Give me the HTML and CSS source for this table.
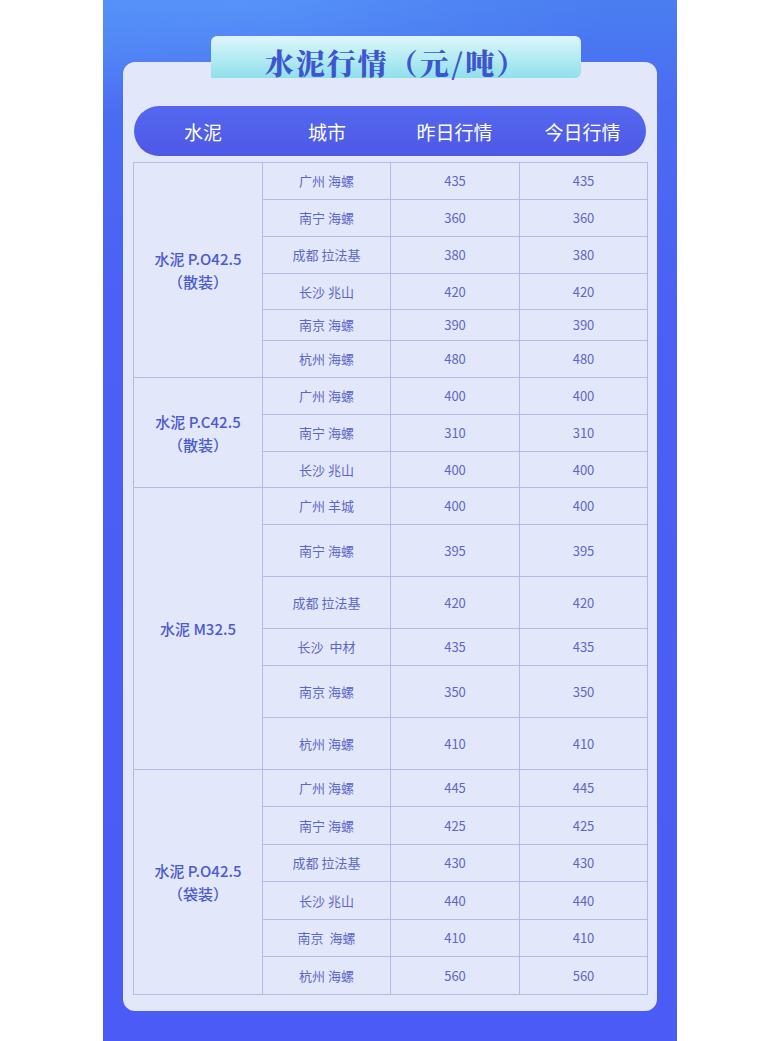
FILE: index.html
```html
<!DOCTYPE html>
<html lang="zh-CN">
<head>
<meta charset="utf-8">
<title>水泥行情</title>
<link rel="stylesheet" href="styles.css">
</head>
<body>
<div class="panel">
  <div class="card">
    <div class="tab">水泥行情（元/吨）</div>
    <div class="pill">
      <span>水泥</span><span>城市</span><span>昨日行情</span><span>今日行情</span>
    </div>
    <table class="grid">
      <colgroup><col class="c1"><col class="c2"><col class="c3"><col class="c4"></colgroup>
      <tbody>
        <tr class="h37"><td class="grp" rowspan="6">水泥 P.O42.5<br>（散装）</td><td>广州 海螺</td><td>435</td><td>435</td></tr>
        <tr class="h37"><td>南宁 海螺</td><td>360</td><td>360</td></tr>
        <tr class="h37"><td>成都 拉法基</td><td>380</td><td>380</td></tr>
        <tr class="h36"><td>长沙 兆山</td><td>420</td><td>420</td></tr>
        <tr class="h31"><td>南京 海螺</td><td>390</td><td>390</td></tr>
        <tr class="h37"><td>杭州 海螺</td><td>480</td><td>480</td></tr>

        <tr class="h37"><td class="grp" rowspan="3">水泥 P.C42.5<br>（散装）</td><td>广州 海螺</td><td>400</td><td>400</td></tr>
        <tr class="h37"><td>南宁 海螺</td><td>310</td><td>310</td></tr>
        <tr class="h36"><td>长沙 兆山</td><td>400</td><td>400</td></tr>

        <tr class="h37"><td class="grp" rowspan="6">水泥 M32.5</td><td>广州 羊城</td><td>400</td><td>400</td></tr>
        <tr class="h52"><td>南宁 海螺</td><td>395</td><td>395</td></tr>
        <tr class="h52"><td>成都 拉法基</td><td>420</td><td>420</td></tr>
        <tr class="h37"><td>长沙&nbsp; 中材</td><td>435</td><td>435</td></tr>
        <tr class="h52"><td>南京 海螺</td><td>350</td><td>350</td></tr>
        <tr class="h52"><td>杭州 海螺</td><td>410</td><td>410</td></tr>

        <tr class="h37"><td class="grp" rowspan="6">水泥 P.O42.5<br>（袋装）</td><td>广州 海螺</td><td>445</td><td>445</td></tr>
        <tr class="h38"><td>南宁 海螺</td><td>425</td><td>425</td></tr>
        <tr class="h37"><td>成都 拉法基</td><td>430</td><td>430</td></tr>
        <tr class="h38"><td>长沙 兆山</td><td>440</td><td>440</td></tr>
        <tr class="h37"><td>南京&nbsp; 海螺</td><td>410</td><td>410</td></tr>
        <tr class="h38"><td>杭州 海螺</td><td>560</td><td>560</td></tr>
      </tbody>
    </table>
  </div>
</div>
</body>
</html>
```
FILE: styles.css
```css
html, body {
  margin: 0;
  padding: 0;
  background: #ffffff;
}
body {
  font-family: "Noto Sans CJK SC", "Noto Sans", sans-serif;
}
.panel {
  width: 574px;
  height: 1041px;
  margin-left: 103px;
  padding-top: 62px;
  box-sizing: border-box;
  background:
    radial-gradient(ellipse 360px 110px at 25% 0%, rgba(95,165,255,0.45), rgba(95,165,255,0) 100%),
    linear-gradient(160deg, rgba(90,160,255,0.35) 0%, rgba(90,160,255,0) 10%),
    linear-gradient(180deg, #4a7ef1 0%, #4b6cf2 10%, #4b60f4 30%, #4b5bf5 100%);
}
.card {
  position: relative;
  width: 534px;
  margin-left: 20px;
  background: #e3e7fa;
  border-radius: 12px;
  padding: 44px 10px 16px;
  box-sizing: border-box;
}
.tab {
  position: absolute;
  top: -26px;
  left: 88px;
  width: 370px;
  height: 42px;
  border-radius: 6px 6px 6px 0;
  background: linear-gradient(180deg, #dcf6fa 0%, #b2ebf2 55%, #8fe0ea 100%);
  color: #3f54cf;
  font-family: "Noto Serif CJK SC", "Noto Sans CJK SC", serif;
  font-weight: 900;
  font-size: 29px;
  letter-spacing: 2px;
  line-height: 54px;
  text-align: center;
}
.pill {
  height: 50px;
  margin: 0 1px 6px;
  border-radius: 25px;
  background: linear-gradient(180deg, #5468ee 0%, #4e58e6 100%);
  display: grid;
  grid-template-columns: 130px 126px 129px 127px;
  align-items: center;
  color: #ffffff;
  font-size: 19px;
  text-align: center;
}
.pill span:first-child { padding-left: 8px; }
.grid {
  width: 514px;
  border-collapse: collapse;
  table-layout: fixed;
  color: #5c67c4;
  font-size: 13px;
}
.c1 { width: 129px; }
.c2 { width: 128px; }
.c3 { width: 129px; }
.c4 { width: 128px; }
.grid td {
  border: 1px solid #b5bbe6;
  text-align: center;
  padding: 0;
  line-height: 18px;
}
.grid td.grp {
  color: #4a5bd0;
  font-size: 15px;
  font-weight: 500;
  line-height: 23px;
}
.h31 td { height: 30px; }
.h36 td { height: 35px; }
.h37 td { height: 36px; }
.h38 td { height: 37px; }
.h52 td { height: 51px; }
```
